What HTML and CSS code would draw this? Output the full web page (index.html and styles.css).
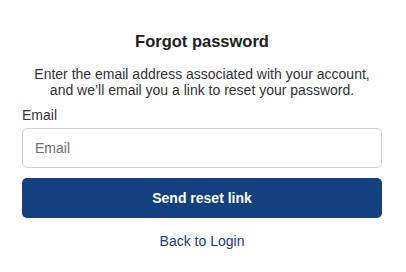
FILE: index.html
```html
<!DOCTYPE html>
<html lang="en">
<head>
    <meta charset="UTF-8">
    <meta name="viewport" content="width=device-width, initial-scale=1.0">
    <title>Forgot password</title>
    <link rel="stylesheet" href="styles.css">
</head>
<body>
    <div class="container">
        <h1>Forgot password</h1>
        <p class="intro">Enter the email address associated with your account, and we’ll email you a link to reset your password.</p>

        <form class="reset-form" onsubmit="return false;">
            <label for="email">Email</label>
            <input type="email" id="email" placeholder="Email">
            <button type="submit">Send reset link</button>
        </form>

        <a href="#" class="back-link">Back to Login</a>
    </div>
</body>
</html>
```

FILE: styles.css
```css
body {
    font-family: 'Liberation Sans', Arial, Helvetica, sans-serif;
    background-color: #fff;
    margin: 0;
    color: #333;
}

.container {
    width: 360px;
    margin: 0 0 0 22px;
    padding-top: 30px;
    display: flex;
    flex-direction: column;
    align-items: center;
}

h1 {
    font-size: 16.5px;
    font-weight: bold;
    color: #222;
    margin: 0 0 14px;
    line-height: 22px;
}

.intro {
    font-size: 14px;
    line-height: 16px;
    text-align: center;
    margin: 0 0 9px;
}

.reset-form {
    width: 100%;
    display: flex;
    flex-direction: column;
}

.reset-form label {
    font-size: 14px;
    line-height: 16px;
    margin-bottom: 5px;
}

.reset-form input {
    height: 40px;
    box-sizing: border-box;
    border: 1px solid #cfd3d8;
    border-radius: 5px;
    padding: 0 12px;
    font-family: inherit;
    font-size: 14px;
    color: #333;
    margin-bottom: 10px;
}

.reset-form input::placeholder {
    color: #6b7078;
}

.reset-form button {
    height: 40px;
    border: none;
    border-radius: 5px;
    background-color: #134180;
    color: #fff;
    font-family: inherit;
    font-size: 14px;
    font-weight: bold;
    cursor: pointer;
}

.back-link {
    margin-top: 15px;
    font-size: 14px;
    color: #134180;
    text-decoration: none;
}
```
